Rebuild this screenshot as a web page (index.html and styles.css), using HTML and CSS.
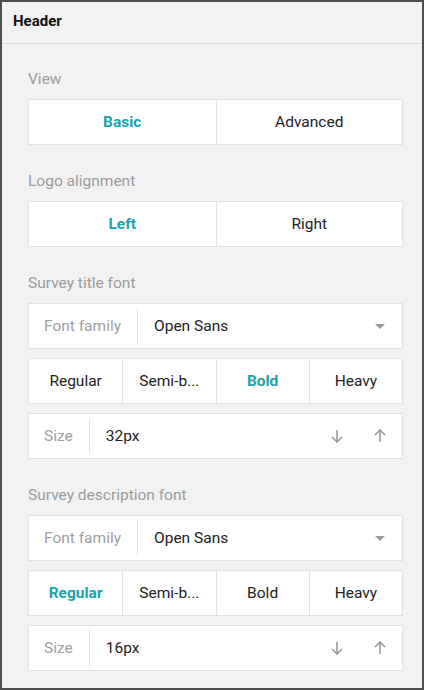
FILE: index.html
```html
<!DOCTYPE html>
<html>
<head>
<meta charset="utf-8">
<link rel="stylesheet" href="styles.css">
</head>
<body>
<div class="panel">
  <div class="panel-header">Header</div>
  <div class="panel-body">
    <div class="section">
      <div class="label">View</div>
      <div class="seg seg-2">
        <div class="seg-btn active">Basic</div>
        <div class="seg-btn">Advanced</div>
      </div>
    </div>
    <div class="section">
      <div class="label">Logo alignment</div>
      <div class="seg seg-2">
        <div class="seg-btn active">Left</div>
        <div class="seg-btn">Right</div>
      </div>
    </div>
    <div class="section">
      <div class="label">Survey title font</div>
      <div class="stack">
        <div class="field">
          <div class="field-label">Font family</div>
          <div class="field-value">Open Sans</div>
          <svg class="caret" width="10" height="5" viewBox="0 0 10 5"><path d="M0 0 L10 0 L5 5 Z" fill="#9a9a9a"/></svg>
        </div>
        <div class="seg seg-4">
          <div class="seg-btn">Regular</div>
          <div class="seg-btn">Semi-b...</div>
          <div class="seg-btn active">Bold</div>
          <div class="seg-btn">Heavy</div>
        </div>
        <div class="field">
          <div class="field-label">Size</div>
          <div class="field-value">32px</div>
          <div class="arrows">
            <svg width="12" height="14" viewBox="0 0 12 14"><path d="M6 1 V13 M1 8 L6 13 L11 8" fill="none" stroke="#9a9a9a" stroke-width="1.6"/></svg>
            <svg width="12" height="14" viewBox="0 0 12 14"><path d="M6 13 V1 M1 6 L6 1 L11 6" fill="none" stroke="#9a9a9a" stroke-width="1.6"/></svg>
          </div>
        </div>
      </div>
    </div>
    <div class="section">
      <div class="label">Survey description font</div>
      <div class="stack">
        <div class="field">
          <div class="field-label">Font family</div>
          <div class="field-value">Open Sans</div>
          <svg class="caret" width="10" height="5" viewBox="0 0 10 5"><path d="M0 0 L10 0 L5 5 Z" fill="#9a9a9a"/></svg>
        </div>
        <div class="seg seg-4">
          <div class="seg-btn active">Regular</div>
          <div class="seg-btn">Semi-b...</div>
          <div class="seg-btn">Bold</div>
          <div class="seg-btn">Heavy</div>
        </div>
        <div class="field">
          <div class="field-label">Size</div>
          <div class="field-value">16px</div>
          <div class="arrows">
            <svg width="12" height="14" viewBox="0 0 12 14"><path d="M6 1 V13 M1 8 L6 13 L11 8" fill="none" stroke="#9a9a9a" stroke-width="1.6"/></svg>
            <svg width="12" height="14" viewBox="0 0 12 14"><path d="M6 13 V1 M1 6 L6 1 L11 6" fill="none" stroke="#9a9a9a" stroke-width="1.6"/></svg>
          </div>
        </div>
      </div>
    </div>
  </div>
</div>
</body>
</html>
```
FILE: styles.css
```css
* { box-sizing: border-box; }
html, body { margin: 0; padding: 0; }
body {
  font-family: Roboto, "Liberation Sans", sans-serif;
  background: #ffffff;
}
.panel {
  width: 424px;
  height: 690px;
  border: 2px solid #4d4d4d;
  background: #f2f2f2;
  overflow: hidden;
}
.panel-header {
  height: 42px;
  border-bottom: 1px solid #dcdcdc;
  padding: 0 11px;
  display: flex;
  align-items: center;
  font-size: 15px;
  font-weight: 700;
  color: #111;
  padding-bottom: 4px;
}
.panel-body {
  padding: 0 19px 0 26px;
}
.section {
  margin-top: 26px;
}
.section:first-child {
  margin-top: 25px;
}
.label {
  font-size: 15.5px;
  line-height: 20px;
  color: #9b9b9b;
  margin-bottom: 10px;
}
.stack {
  display: flex;
  flex-direction: column;
  gap: 9px;
}
.seg {
  display: grid;
  height: 46px;
  background: #fff;
  border: 1px solid #e2e2e2;
}
.seg-2 { grid-template-columns: 1fr 1fr; }
.seg-4 { grid-template-columns: 1fr 1fr 1fr 1fr; }
.seg-btn {
  display: flex;
  align-items: center;
  justify-content: center;
  font-size: 15.5px;
  color: #222;
  border-left: 1px solid #e2e2e2;
}
.seg-btn:first-child { border-left: none; }
.seg-btn.active {
  color: #22a2ab;
  font-weight: 700;
}
.field {
  display: flex;
  align-items: stretch;
  height: 46px;
  background: #fff;
  border: 1px solid #e2e2e2;
}
.field-label {
  display: flex;
  align-items: center;
  padding: 0 16px 0 15px;
  margin: 4px 0;
  border-right: 1px solid #e2e2e2;
  font-size: 15.5px;
  color: #a0a0a0;
}
.field-value {
  flex: 1;
  display: flex;
  align-items: center;
  padding-left: 16px;
  font-size: 15.5px;
  color: #222;
}
.caret {
  align-self: center;
  margin-right: 17px;
}
.arrows {
  display: flex;
  align-items: center;
  gap: 31px;
  padding-right: 16px;
}
```
